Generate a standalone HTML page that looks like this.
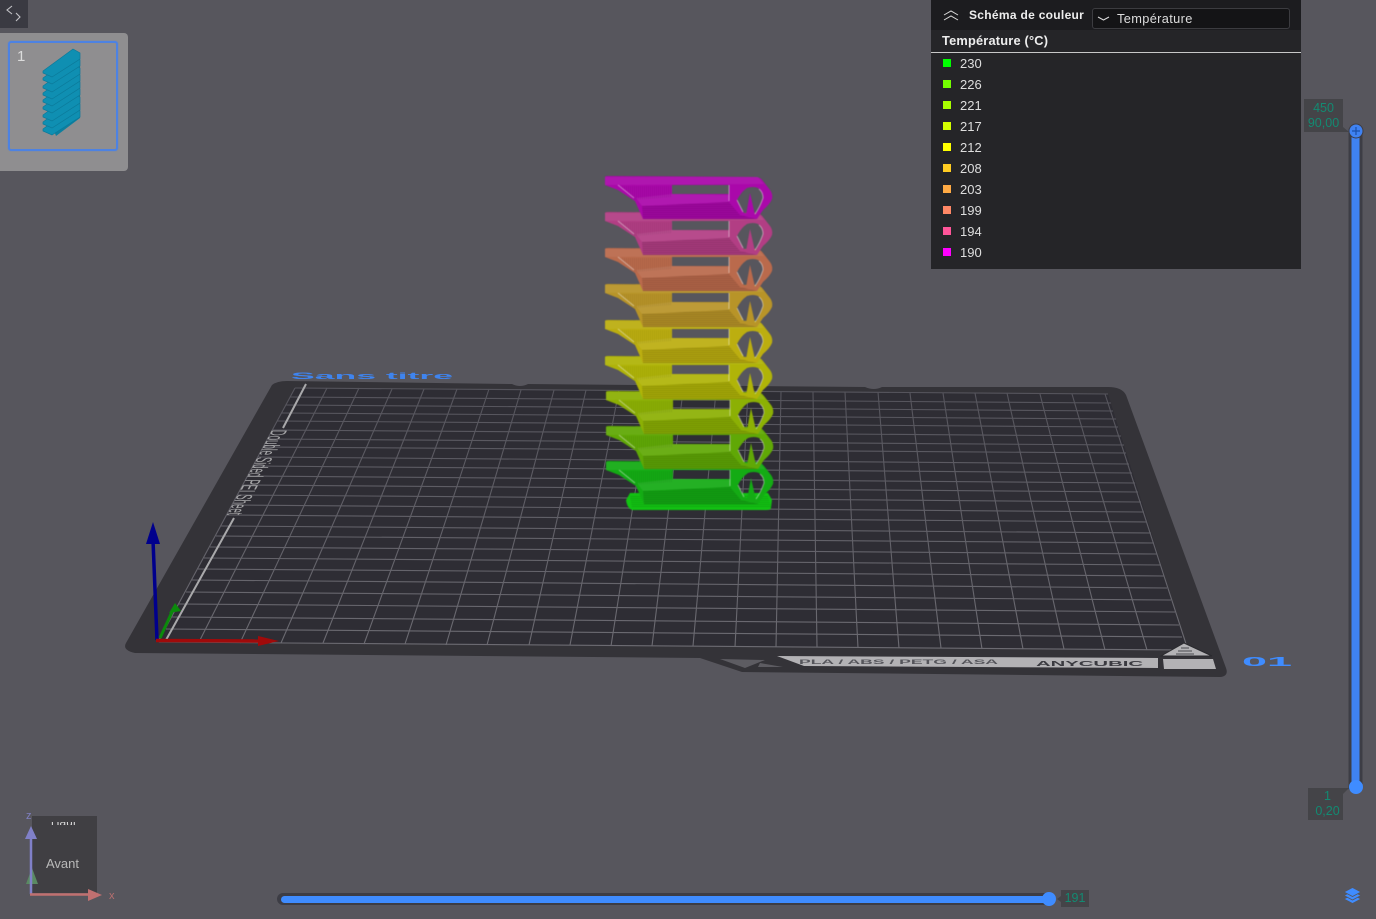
<!DOCTYPE html>
<html lang="fr">
<head>
<meta charset="utf-8">
<title>Aperçu</title>
<style>
html,body{margin:0;padding:0;background:#57565d;}
#page{position:relative;width:1376px;height:919px;overflow:hidden;background:#57565d;font-family:"Liberation Sans","DejaVu Sans",sans-serif;}
svg.full{position:absolute;left:0;top:0;}
#toggle{position:absolute;left:0;top:0;width:28px;height:28px;background:#3a3a42;}
#thumbs{position:absolute;left:0;top:33px;width:128px;height:138px;background:#8f8e90;border-radius:0 4px 4px 0;}
#thumb{position:absolute;left:8px;top:8px;width:106px;height:106px;border:2px solid #4d82e2;border-radius:3px;box-shadow:0 0 1px #4d82e2;}
#thumbn{position:absolute;left:17px;top:15px;color:#dcdcdc;font-size:15px;line-height:18px;}
#legend{position:absolute;left:931px;top:0;width:370px;height:269px;background:#252528;color:#e4e4e4;}
#lhead{position:absolute;left:0;top:0;width:370px;height:30px;background:#1c1c1f;}
#ltitle{position:absolute;left:38px;top:8px;font-size:12px;font-weight:bold;line-height:15px;letter-spacing:.3px;color:#eee;white-space:nowrap;}
#dd{position:absolute;left:161px;top:8px;width:196px;height:19px;background:#141416;border:1px solid #3c3c40;border-radius:3px;}
#ddt{position:absolute;left:24px;top:2px;font-size:12.8px;line-height:16px;color:#ddd;letter-spacing:.35px;white-space:nowrap;}
#lsub{position:absolute;left:11px;top:33px;font-size:12.8px;font-weight:bold;line-height:15px;letter-spacing:.2px;color:#eee;white-space:nowrap;}
#lline{position:absolute;left:0;top:52px;width:370px;height:1px;background:#c8c8c8;}
.sw{position:absolute;left:12px;width:8px;height:8px;}
.val{position:absolute;left:29px;font-size:13px;line-height:16px;color:#dedede;}
.tip{position:absolute;background:#444448;color:#138a72;font-size:12.5px;line-height:15px;text-align:center;white-space:nowrap;}
#cube{position:absolute;left:32px;top:816px;width:65px;height:77px;background:#403f43;overflow:hidden;}
#haut{position:absolute;left:0;width:63px;top:-1px;text-align:center;color:#d8d8d8;font-size:12px;line-height:14px;height:10px;overflow:hidden;clip-path:inset(7px 0 0 0);}
#avant{position:absolute;left:0;width:61px;top:40px;text-align:center;color:#b9b9b9;font-size:13px;line-height:16px;}
</style>
</head>
<body>
<div id="page">

<svg class="full" width="1376" height="919" viewBox="0 0 1376 919" xmlns="http://www.w3.org/2000/svg">
  <defs>
    <linearGradient id="gridc" gradientUnits="userSpaceOnUse" x1="0" y1="388" x2="0" y2="650">
      <stop offset="0" stop-color="#55545c"/>
      <stop offset="1" stop-color="#6c6b72"/>
    </linearGradient>
    <pattern id="hatch" width="3" height="2" patternUnits="userSpaceOnUse">
      <rect width="3" height="1" fill="#000" opacity=".12"/>
    </pattern>
    <pattern id="hatch2" width="2" height="2" patternUnits="userSpaceOnUse">
      <rect width="1" height="2" fill="#000" opacity=".08"/>
    </pattern>
    <g id="layer">
      <path fill="currentColor" fill-rule="evenodd" d="M605 177Q605 176 608 176L756 177Q760 177 763 181L770 190Q773 194 772 199Q770 204 763 210L757 219L643 219L635 201L618 190L605 185ZM672 185L729 185L729 194L672 194ZM737 200Q741 192 747 188Q753 186 758 188Q763 192 763 198Q760 207 755 215L744 213Q740 207 737 200Z"/>
      <path fill="currentColor" d="M746 215L750 193L755 215Z"/>
      <path fill="url(#hatch2)" d="M618 186L672 186L672 197L635 200Z"/>
      <path fill="#fff" opacity=".07" d="M636 198L672 194L729 195L729 202L642 206Z"/>
      <path fill="#000" opacity=".06" d="M642 206L729 202L740 215L757 219L643 219Z"/>
      <path fill="url(#hatch)" d="M642 206L729 202L740 215L757 219L643 219Z"/>
      <path fill="none" stroke="#fff" stroke-opacity=".45" stroke-width="1" d="M729 185V201M618 185L634 198M759 189Q763 192 763 198Q760 207 755 214M737 200L743 212"/>
      <path fill="#fff" opacity=".06" d="M605 177L758 177L764 184L605 185Z"/>
    </g>
  </defs>

  <!-- plate -->
  <path fill="#343338" d="M272 385Q277 381 287 381L512 384Q520 388 528 384L865 387Q874 391 882 387L1108 387Q1122 387 1126 395L1226 668Q1229 676 1220 677L742 672L700 658L135 653Q122 650 126 643Z"/>
  <!-- grid bed -->
  <path fill="#2e2d34" d="M295 388L1108 394L1188 650L158 642Z"/>
  <path fill="none" stroke="url(#gridc)" stroke-width="1.100" d="M295 388L1108 394M290 397L1111 403M286 405L1113 411M282 413L1116 419M277 421L1118 427M273 430L1121 436M268 439L1124 445M263 447L1126 453M258 457L1129 464M253 466L1132 473M248 476L1135 483M243 485L1138 492M238 495L1141 502M232 505L1144 512M227 515L1147 522M221 526L1151 533M216 536L1154 543M210 547L1157 554M204 558L1161 565M198 569L1164 576M192 580L1167 588M186 592L1171 600M179 604L1175 612M172 617L1179 625M166 629L1182 637M159 642L1186 650"/>
  <path fill="none" stroke="url(#gridc)" stroke-width="1.100" d="M295 388L158 642M327 388L199 642M359 388L240 643M392 389L281 643M424 389L323 643M457 389L364 644M489 389L405 644M521 390L446 645M554 390L487 645M586 390L529 645M619 390L570 645M651 391L611 646M683 391L652 646M716 391L693 646M748 391L735 647M781 392L776 647M813 392L817 647M845 392L858 648M878 392L899 648M910 393L941 648M943 393L982 649M975 393L1023 649M1007 393L1064 649M1040 394L1105 650M1072 394L1147 650M1105 394L1188 650"/>

  <!-- plate edge printing -->
  <path fill="none" stroke="#a9a9ab" stroke-width="2" d="M306 384L283 428M234 518L166 640"/>
  <text transform="matrix(-.375 .708 -1.86 0 272 430)" font-family="'Liberation Sans',sans-serif" font-size="12" fill="#a4a4a6" textLength="120" lengthAdjust="spacingAndGlyphs">Double Sided PEI Sheet</text>
  <text transform="translate(291 379) scale(1 .55)" font-family="'Liberation Sans',sans-serif" font-weight="bold" font-size="17" fill="#3f84ee" textLength="162" lengthAdjust="spacingAndGlyphs">Sans titre</text>

  <!-- bottom strip -->
  <path fill="#b3b2b5" d="M777 656L1158 658L1158 668L804 666Z"/>
  <text transform="translate(799 664) scale(1 .62)" font-family="'Liberation Sans',sans-serif" font-weight="bold" font-size="11" fill="#55555b" textLength="199" lengthAdjust="spacingAndGlyphs">PLA / ABS / PETG / ASA</text>
  <text transform="translate(1036 666) scale(1 .62)" font-family="'Liberation Sans',sans-serif" font-weight="bold" font-size="12" fill="#3a3a40" textLength="107" lengthAdjust="spacingAndGlyphs">ANYCUBIC</text>
  <path fill="#b3b2b5" d="M1163 659L1213 659L1216 669L1164 669Z"/>
  <path fill="#b3b2b5" stroke="#2a2a2e" d="M1184 643L1212 656L1161 656Z"/>
  <path fill="none" stroke="#4a4a50" d="M1176 654H1194M1178 651H1192M1181 648H1189"/>
  <path fill="#5d5c62" d="M720 659L765 660L745 668Z"/>
  <path fill="#5d5c62" d="M760 663L783 667L758 667Z"/>
  <text transform="translate(1242 666) scale(1 .62)" font-family="'Liberation Sans',sans-serif" font-weight="bold" font-size="21" fill="#3f8cff" textLength="50" lengthAdjust="spacingAndGlyphs">01</text>

  <!-- world axes -->
  <path fill="none" stroke="#00008c" stroke-width="3.5" d="M157 640L153 540"/>
  <path fill="#00008c" d="M153 522L160 544L146 544Z"/>
  <path fill="none" stroke="#0b8a0b" stroke-width="3" d="M160 638L172 612"/>
  <path fill="#0b8a0b" d="M175 603L181 611L169 613Z"/>
  <path fill="none" stroke="#a00a0a" stroke-width="3.5" d="M156 640.500L262 641"/>
  <path fill="#a00a0a" d="M279 641L258 636L258 646Z"/>

  <g style="filter:blur(.4px)">
    <!-- base raft -->
    <path fill="#12c212" d="M630 493L768 493L772 500L771 508Q771 510 766 510L632 510Q627 508 626 500Z"/>
    <path fill="url(#hatch)" d="M630 496L768 496L771 507L632 508Z"/>
    <!-- tower, painted from bottom up -->
    <use href="#layer" y="285" x="1" style="color:#14ab14"/>
    <use href="#layer" y="250" x="1" style="color:#60a806"/>
    <use href="#layer" y="215" x="1" style="color:#8cb004"/>
    <use href="#layer" y="180" style="color:#b0b408"/>
    <use href="#layer" y="144" style="color:#bcae10"/>
    <use href="#layer" y="108" style="color:#b89428"/>
    <use href="#layer" y="72" style="color:#ba6a4c"/>
    <use href="#layer" y="36" style="color:#b23e84"/>
    <use href="#layer" y="0" style="color:#aa08aa"/>
  </g>

  <!-- vertical slider -->
  <rect x="1348.500" y="128" width="14" height="662" rx="2" fill="#3d3d45"/>
  <rect x="1351.500" y="131" width="8" height="656" fill="#3f82f2"/>
  <circle cx="1356" cy="131" r="7" fill="#3f82f2" stroke="#3d3d45"/>
  <path stroke="#1b4fa8" stroke-width="1.200" d="M1352 131H1360M1356 127V135"/>
  <circle cx="1356" cy="787" r="7" fill="#3f8cff"/>

  <!-- horizontal slider -->
  <rect x="277" y="893" width="774" height="12" rx="6" fill="#3d3d45"/>
  <rect x="281" y="896" width="768" height="7" rx="3.500" fill="#3f8cff"/>
  <circle cx="1049" cy="899" r="7" fill="#3f8cff"/>
  <path fill="#444448" d="M1061 896L1057 899L1061 902Z"/>
  <path fill="#444448" d="M1343 127L1349 132L1343 132Z"/>
  <path fill="#444448" d="M1343 794L1349 788L1343 788Z"/>

  <!-- layers icon -->
  <path fill="#3f8cff" stroke="#57565d" stroke-width=".8" d="M1344 899L1352.500 894.500L1361 899L1352.500 903.500Z"/>
  <path fill="#3f8cff" stroke="#57565d" stroke-width=".8" d="M1344 895.500L1352.500 891L1361 895.500L1352.500 900Z"/>
  <path fill="#3f8cff" stroke="#57565d" stroke-width=".8" d="M1344 892L1352.500 887.500L1361 892L1352.500 896.500Z"/>
</svg>

<div id="toggle">
  <svg width="28" height="28" viewBox="0 0 28 28" style="position:absolute;left:0;top:0">
    <path fill="none" stroke="#c4c4c8" stroke-width="1.100" d="M12 6L7 10L12 14M16 13L20 17L16 21"/>
  </svg>
</div>

<div id="thumbs">
  <div id="thumb"></div>
  <div id="thumbn">1</div>
  <svg width="128" height="138" viewBox="0 33 128 138" style="position:absolute;left:0;top:0">
    <defs>
      <path id="slab" d="M43 0L73 -22L80 -18L80 -12L52 6L43 2Z" fill="#0f8fb2" stroke="#0b7a9a" stroke-width=".7"/>
    </defs>
    <path fill="#0c7f9f" d="M73 50L80 53L80 118L56 136L50 120Z"/>
    <use href="#slab" y="129"/>
    <use href="#slab" y="122"/>
    <use href="#slab" y="115"/>
    <use href="#slab" y="107"/>
    <use href="#slab" y="100"/>
    <use href="#slab" y="93"/>
    <use href="#slab" y="86"/>
    <use href="#slab" y="78"/>
    <use href="#slab" y="71"/>
  </svg>
</div>

<div id="legend">
  <div id="lhead"></div>
  <svg width="20" height="14" viewBox="0 0 20 14" style="position:absolute;left:10px;top:9px">
    <path fill="none" stroke="#dcdcdc" stroke-width="1" d="M3 6L10 2L17 6M3 11L10 7L17 11"/>
  </svg>
  <div id="ltitle">Schéma de couleur</div>
  <div id="dd">
    <svg width="14" height="8" viewBox="0 0 14 8" style="position:absolute;left:4px;top:6px">
      <path fill="none" stroke="#dcdcdc" stroke-width="1" d="M1 2L6.500 5L12 2"/>
    </svg>
    <div id="ddt">Température</div>
  </div>
  <div id="lsub">Température (°C)</div>
  <div id="lline"></div>
  <div class="sw" style="top:59px;background:#00ff00"></div><div class="val" style="top:56px">230</div>
  <div class="sw" style="top:80px;background:#73ff00"></div><div class="val" style="top:77px">226</div>
  <div class="sw" style="top:101px;background:#a8ff00"></div><div class="val" style="top:98px">221</div>
  <div class="sw" style="top:122px;background:#d4ff00"></div><div class="val" style="top:119px">217</div>
  <div class="sw" style="top:143px;background:#ffff00"></div><div class="val" style="top:140px">212</div>
  <div class="sw" style="top:164px;background:#ffcc22"></div><div class="val" style="top:161px">208</div>
  <div class="sw" style="top:185px;background:#ffaa44"></div><div class="val" style="top:182px">203</div>
  <div class="sw" style="top:206px;background:#ff8866"></div><div class="val" style="top:203px">199</div>
  <div class="sw" style="top:227px;background:#ff5599"></div><div class="val" style="top:224px">194</div>
  <div class="sw" style="top:248px;background:#ff00ff"></div><div class="val" style="top:245px">190</div>
</div>

<div class="tip" style="left:1304px;top:99px;width:39px;height:33px;padding-top:2px;box-sizing:border-box">450<br>90,00</div>
<div class="tip" style="left:1308px;top:788px;width:35px;height:32px;padding:1px 0 0 4px;box-sizing:border-box">1<br>0,20</div>
<div class="tip" style="left:1061px;top:890px;width:28px;height:17px;line-height:17px">191</div>

<div id="cube">
  <div id="haut">Haut</div>
  <div id="avant">Avant</div>
</div>
<svg class="full" width="1376" height="919" viewBox="0 0 1376 919" style="pointer-events:none">
  <path fill="#5a8a62" d="M32 868L38 884L26 884Z"/>
  <path fill="none" stroke="#8080c8" stroke-width="2.500" d="M31 894V836"/>
  <path fill="#8080c8" d="M31 826L37 839L25 839Z"/>
  <path fill="none" stroke="#c07070" stroke-width="2.500" d="M30 894.500H90"/>
  <path fill="#c07070" d="M102 895L88 889L88 901Z"/>
  <text x="26" y="819" font-family="'Liberation Sans',sans-serif" font-size="11" fill="#7f7fc0">z</text>
  <text x="109" y="899" font-family="'Liberation Sans',sans-serif" font-size="11" fill="#b87070">x</text>
</svg>

</div>
</body>
</html>
